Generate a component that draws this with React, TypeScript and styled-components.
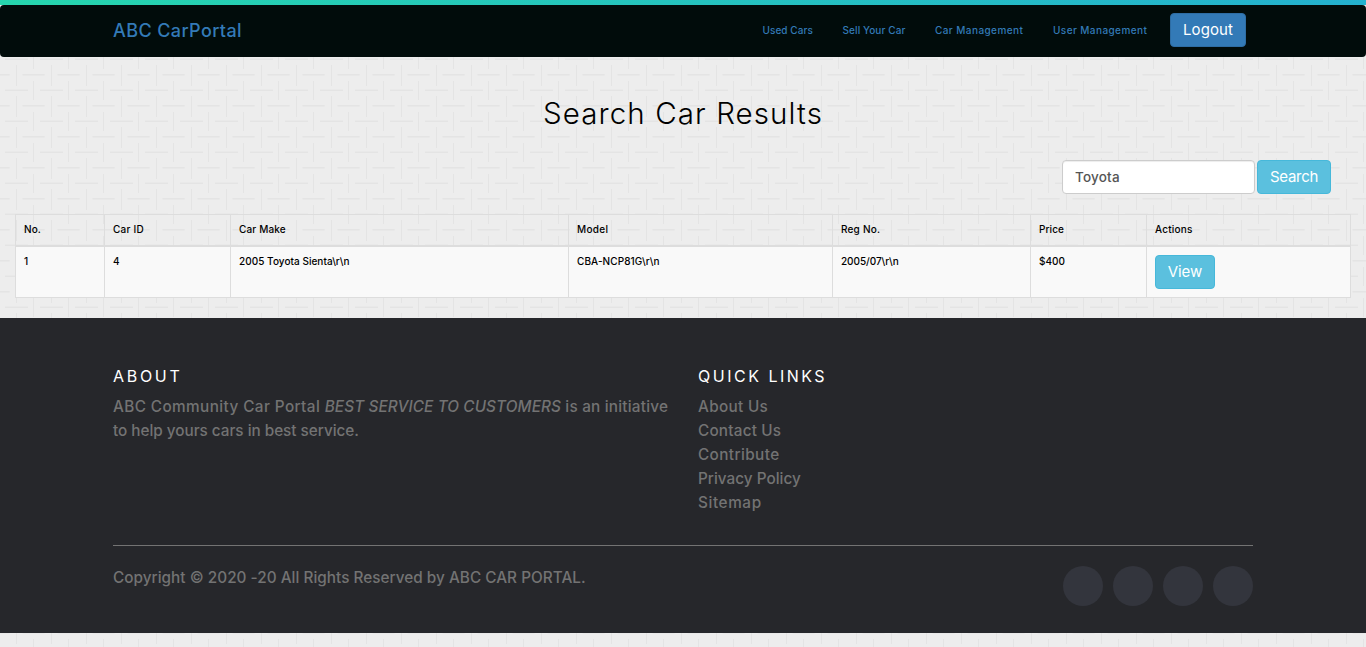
import React from "react";
import styled, { createGlobalStyle } from "styled-components";

const weave = encodeURIComponent(
  `<svg xmlns="http://www.w3.org/2000/svg" width="35" height="31"><g fill="#e4e4e4"><rect x="5" y="27.6" width="23" height="1.5"/><rect x="22.5" y="12" width="12.5" height="1.5"/><rect x="0" y="12" width="9.7" height="1.5"/><rect x="16" y="3" width="1" height="21"/><rect x="33" y="19" width="1" height="12"/><rect x="33" y="0" width="1" height="7"/></g></svg>`
);

const GlobalStyle = createGlobalStyle`
  *, *::before, *::after { box-sizing: border-box; }
  body {
    margin: 0;
    min-height: 100vh;
    background: #ededed url("data:image/svg+xml,${weave}");
    font-family: Inter, "Liberation Sans", sans-serif;
    font-size: 10px;
    line-height: 14px;
    color: #000;
    overflow: hidden;
  }
  a { color: inherit; text-decoration: none; }
  h1, h2, p, ul { margin: 0; padding: 0; }
  ul { list-style: none; }
`;

const Spaced = styled.span<{ $ls: number }>`
  letter-spacing: ${(p) => p.$ls}px;
  white-space: nowrap;
`;

const TopStripe = styled.div`
  height: 5px;
  background: linear-gradient(90deg, #26d6ae, #24b1cf);
`;

const Navbar = styled.nav`
  height: 52px;
  border-radius: 4px;
  background: #010c0b;
`;

const Container = styled.div`
  width: 1140px;
  margin: 0 auto;
`;

const NavInner = styled(Container)`
  height: 100%;
  display: flex;
  align-items: center;
  justify-content: space-between;
  color: #337ab7;
`;

const Brand = styled.a`
  font-size: 18px;
  line-height: 24px;
  font-weight: 500;
`;

const NavLinks = styled.div`
  display: flex;
  align-items: center;
  padding: 0 7px 2px 0;
`;

const NavLink = styled.a<{ $w: number }>`
  width: ${(p) => p.$w}px;
  font-weight: 500;
`;

const Button = styled.button<{ $kind: "primary" | "info"; $w: number }>`
  width: ${(p) => p.$w}px;
  height: 34px;
  padding: 0;
  border: 1px solid ${(p) => (p.$kind === "primary" ? "#2e6da4" : "#46b8da")};
  border-radius: 4px;
  background: ${(p) => (p.$kind === "primary" ? "#337ab7" : "#5bc0de")};
  color: #fff;
  font: 400 15px/20px Inter, "Liberation Sans", sans-serif;
  text-align: center;
`;

const Main = styled.main`
  padding: 35px 15px 20px;
`;

const Title = styled.h1`
  font-size: 29.5px;
  line-height: 42px;
  font-weight: 300;
  text-align: center;
`;

const SearchForm = styled.form`
  display: flex;
  justify-content: flex-end;
  gap: 2px;
  padding: 26px 20px 20px 0;
`;

const SearchInput = styled.input`
  width: 193px;
  height: 34px;
  padding: 6px 12px;
  border: 1px solid #ccc;
  border-radius: 4px;
  background: #fff;
  box-shadow: inset 0 1px 1px rgba(0, 0, 0, 0.075);
  color: #555;
  font: 500 13.5px/20px Inter, "Liberation Sans", sans-serif;
  letter-spacing: 0.2px;
`;

const Table = styled.table`
  width: 1336px;
  table-layout: fixed;
  border-collapse: collapse;
  border: 1px solid #ddd;
`;

const HeadCell = styled.th`
  height: 31px;
  padding: 7px 8px 8px;
  border: 1px solid #ddd;
  border-bottom-width: 2px;
  font-weight: 500;
  text-align: left;
`;

const Cell = styled.td`
  height: 51px;
  padding: 7px 8px 8px;
  border: 1px solid #ddd;
  background: #f9f9f9;
  font-weight: 500;
  vertical-align: top;
`;

const ActionCell = styled(Cell)`
  padding-top: 8px;
`;

const Footer = styled.footer`
  height: 315px;
  padding-top: 46px;
  background: #26272b;
  color: #737373;
  font-size: 15.3px;
  line-height: 24px;
  font-weight: 500;
`;

const FooterColumns = styled.div`
  display: grid;
  grid-template-columns: 585px 1fr;
  height: 181px;
`;

const FooterHeading = styled.h2`
  color: #fff;
  font-size: 16px;
  line-height: 24px;
  font-weight: 400;
  margin-bottom: 7px;
`;

const FooterBottom = styled.div`
  display: flex;
  justify-content: space-between;
  border-top: 1px solid #737373;
  padding-top: 20px;
`;

const Socials = styled.div`
  display: flex;
  gap: 10px;
`;

const SocialDot = styled.a`
  width: 40px;
  height: 40px;
  border-radius: 50%;
  background: #33353d;
`;

const navItems = [
  { label: "Used Cars", width: 80, ls: 0.07 },
  { label: "Sell Your Car", width: 92.5, ls: 0.1 },
  { label: "Car Management", width: 118, ls: 0.43 },
  { label: "User Management", width: 117, ls: 0.42 },
];

const columns = [
  { label: "No.", width: 89, value: "1", ls: 0.1, vls: 0 },
  { label: "Car ID", width: 126, value: "4", ls: 0.25, vls: 0 },
  { label: "Car Make", width: 338, value: "2005 Toyota Sienta\\r\\n", ls: 0.15, vls: 0.04 },
  { label: "Model", width: 264, value: "CBA-NCP81G\\r\\n", ls: 0.3, vls: 0.08 },
  { label: "Reg No.", width: 198, value: "2005/07\\r\\n", ls: 0.2, vls: -0.05 },
  { label: "Price", width: 116, value: "$400", ls: 0.1, vls: 0 },
];

const quickLinks = [
  { label: "About Us", ls: 0.32 },
  { label: "Contact Us", ls: 0.2 },
  { label: "Contribute", ls: 0.4 },
  { label: "Privacy Policy", ls: 0.02 },
  { label: "Sitemap", ls: 0.6 },
];

export default function App() {
  return (
    <>
      <GlobalStyle />
      <TopStripe />
      <Navbar>
        <NavInner>
          <Brand href="#"><Spaced $ls={0.4}>ABC CarPortal</Spaced></Brand>
          <NavLinks>
            {navItems.map((n) => (
              <NavLink key={n.label} href="#" $w={n.width}><Spaced $ls={n.ls}>{n.label}</Spaced></NavLink>
            ))}
            <Button $kind="primary" $w={76}><Spaced $ls={0.1}>Logout</Spaced></Button>
          </NavLinks>
        </NavInner>
      </Navbar>
      <Main>
        <Title><Spaced $ls={1.1}>Search Car Results</Spaced></Title>
        <SearchForm onSubmit={(e) => e.preventDefault()}>
          <SearchInput defaultValue="Toyota" />
          <Button $kind="info" $w={74}><Spaced $ls={-0.3}>Search</Spaced></Button>
        </SearchForm>
        <Table>
          <colgroup>
            {columns.map((c) => <col key={c.label} width={c.width} />)}
            <col />
          </colgroup>
          <thead>
            <tr>
              {columns.map((c) => (
                <HeadCell key={c.label}><Spaced $ls={c.ls}>{c.label}</Spaced></HeadCell>
              ))}
              <HeadCell><Spaced $ls={0.2}>Actions</Spaced></HeadCell>
            </tr>
          </thead>
          <tbody>
            <tr>
              {columns.map((c) => (
                <Cell key={c.label}><Spaced $ls={c.vls}>{c.value}</Spaced></Cell>
              ))}
              <ActionCell><Button $kind="info" $w={60}><Spaced $ls={0}>View</Spaced></Button></ActionCell>
            </tr>
          </tbody>
        </Table>
      </Main>
      <Footer>
        <Container>
          <FooterColumns>
            <div>
              <FooterHeading><Spaced $ls={2.7}>ABOUT</Spaced></FooterHeading>
              <p>
                <Spaced $ls={0.41}>ABC Community Car Portal </Spaced>
                <Spaced as="i" $ls={0.11}>BEST SERVICE TO CUSTOMERS</Spaced>
                <Spaced $ls={0.22}> is an initiative</Spaced>
                <br />
                <Spaced $ls={-0.02}>to help yours cars in best service.</Spaced>
              </p>
            </div>
            <div>
              <FooterHeading><Spaced $ls={2.5}>QUICK LINKS</Spaced></FooterHeading>
              <ul>
                {quickLinks.map((l) => (
                  <li key={l.label}><a href="#"><Spaced $ls={l.ls}>{l.label}</Spaced></a></li>
                ))}
              </ul>
            </div>
          </FooterColumns>
          <FooterBottom>
            <p><Spaced $ls={0.03}>Copyright © 2020 -20 All Rights Reserved by ABC CAR PORTAL.</Spaced></p>
            <Socials>
              <SocialDot href="#" />
              <SocialDot href="#" />
              <SocialDot href="#" />
              <SocialDot href="#" />
            </Socials>
          </FooterBottom>
        </Container>
      </Footer>
    </>
  );
}
